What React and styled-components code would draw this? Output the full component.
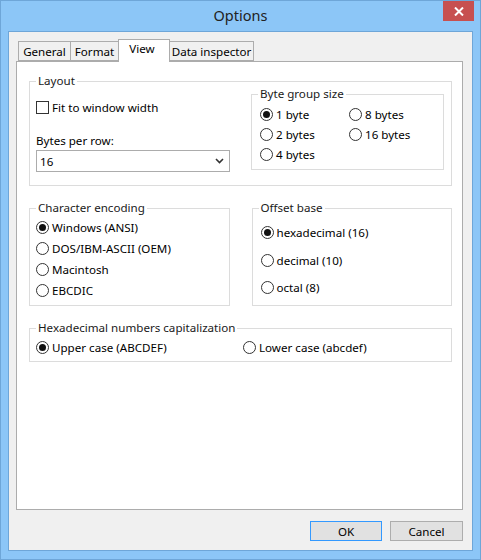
import React from "react";
import styled, { createGlobalStyle } from "styled-components";

const GlobalStyle = createGlobalStyle`
  html, body {
    margin: 0;
    padding: 0;
    background: #8cc6f7;
  }
  body {
    font-family: "Noto Sans", "Open Sans", sans-serif;
    font-size: 11.6px;
    color: #000;
  }
`;

const Window = styled.div`
  width: 481px;
  height: 560px;
  box-sizing: border-box;
  background: #8cc6f7;
  border: 1px solid #6ea6d8;
  display: flex;
  flex-direction: column;
`;

const TitleBar = styled.div`
  position: relative;
  box-sizing: border-box;
  height: 30px;
  padding-bottom: 3px;
  display: flex;
  align-items: center;
  justify-content: center;
  font-size: 14.5px;
  color: #222;
`;

const CloseButton = styled.div`
  position: absolute;
  top: 0;
  right: 6px;
  width: 31px;
  height: 20px;
  background: #c75050;
  display: flex;
  align-items: center;
  justify-content: center;
`;

const Client = styled.div`
  margin: 0 7px 8px 7px;
  height: 520px;
  box-sizing: border-box;
  background: #f0f0f0;
  border: 1px solid #6ea6d8;
  padding: 7px 9px 0 7px;
  display: flex;
  flex-direction: column;
`;

const TabStrip = styled.div`
  display: flex;
  align-items: flex-end;
  height: 22px;
  padding-left: 2px;
  position: relative;
  z-index: 1;
`;

const Tab = styled.div`
  box-sizing: border-box;
  width: ${(p) => p.$w}px;
  height: ${(p) => (p.$active ? 23 : 20)}px;
  margin-bottom: ${(p) => (p.$active ? -1 : 0)}px;
  margin-left: -1px;
  border: 1px solid #acacac;
  border-bottom: ${(p) => (p.$active ? "none" : "1px solid #acacac")};
  background: ${(p) => (p.$active ? "#fff" : "#f0f0f0")};
  display: flex;
  align-items: ${(p) => (p.$active ? "flex-start" : "center")};
  justify-content: center;
  padding: ${(p) => (p.$active ? "1px 4px 0 0" : "0")};
  white-space: nowrap;
  &:first-child {
    margin-left: 0;
  }
`;

const Panel = styled.div`
  box-sizing: border-box;
  height: 449px;
  background: #fff;
  border: 1px solid #acacac;
  padding: 19px 10px 0 12px;
  display: flex;
  flex-direction: column;
  gap: 22px;
`;

const Group = styled.div`
  position: relative;
  box-sizing: border-box;
  border: 1px solid #dcdcdc;
  width: ${(p) => (p.$w ? `${p.$w}px` : "auto")};
  height: ${(p) => p.$h}px;
  padding: ${(p) => p.$pad || "0"};
`;

const GroupRow = styled.div`
  display: flex;
  gap: 22px;
`;

const Legend = styled.span`
  position: absolute;
  top: -9px;
  left: 6px;
  padding: 0 2px;
  background: #fff;
  line-height: 16px;
  color: #1a1a1a;
`;

const LayoutRow = styled.div`
  display: flex;
  align-items: flex-start;
  height: 100%;
  padding: 0 7px 0 6px;
`;

const LeftColumn = styled.div`
  width: 194px;
  padding-top: 17px;
  display: flex;
  flex-direction: column;
`;

const FieldLabel = styled.div`
  margin-top: 18px;
  line-height: 16px;
`;

const Select = styled.div`
  box-sizing: border-box;
  margin-top: 1px;
  height: 22px;
  border: 1px solid #acacac;
  display: flex;
  align-items: center;
  justify-content: space-between;
  padding: 0 5px 0 3px;
`;

const InnerGroup = styled(Group)`
  margin-left: auto;
  margin-top: 12px;
`;

const Options = styled.div`
  display: grid;
  grid-template-columns: ${(p) => p.$cols || "1fr"};
  grid-auto-rows: ${(p) => p.$row}px;
`;

const OptionRow = styled.label`
  display: flex;
  align-items: center;
  gap: 3px;
  height: ${(p) => (p.$h ? `${p.$h}px` : "auto")};
  white-space: nowrap;
`;

const Circle = styled.span`
  box-sizing: border-box;
  width: 13px;
  height: 13px;
  border-radius: 50%;
  border: 1px solid #333;
  background: #fff;
  display: flex;
  align-items: center;
  justify-content: center;
  flex-shrink: 0;
  &::after {
    content: "";
    width: 7px;
    height: 7px;
    border-radius: 50%;
    background: ${(p) => (p.$on ? "#111" : "transparent")};
  }
`;

const Box = styled.span`
  box-sizing: border-box;
  width: 13px;
  height: 13px;
  border: 1px solid #333;
  background: #fff;
  flex-shrink: 0;
`;

const ButtonBar = styled.div`
  display: flex;
  justify-content: flex-end;
  gap: 8px;
  margin-top: 11px;
`;

const Button = styled.div`
  box-sizing: border-box;
  width: ${(p) => p.$w}px;
  height: 20px;
  background: #e1e1e1;
  border: 1px solid ${(p) => (p.$default ? "#3399ff" : "#adadad")};
  display: flex;
  align-items: center;
  justify-content: center;
`;

const Radio = ({ on, children }) => (
  <OptionRow>
    <Circle $on={on} />
    {children}
  </OptionRow>
);

const Chevron = () => (
  <svg width="9" height="6" viewBox="0 0 9 6">
    <path d="M1 1 L4.5 4.5 L8 1" fill="none" stroke="#333" strokeWidth="1.6" />
  </svg>
);

const CloseIcon = () => (
  <svg width="10" height="9" viewBox="0 0 10 9">
    <path d="M1 0.5 L9 8.5 M9 0.5 L1 8.5" stroke="#fff" strokeWidth="2" />
  </svg>
);

export default function App() {
  return (
    <>
      <GlobalStyle />
      <Window>
        <TitleBar>
          Options
          <CloseButton>
            <CloseIcon />
          </CloseButton>
        </TitleBar>
        <Client>
          <TabStrip>
            <Tab $w={53}>General</Tab>
            <Tab $w={49}>Format</Tab>
            <Tab $w={52} $active>
              View
            </Tab>
            <Tab $w={85}>Data inspector</Tab>
          </TabStrip>
          <Panel>
            <Group $h={105}>
              <Legend>Layout</Legend>
              <LayoutRow>
                <LeftColumn>
                  <OptionRow $h={16}>
                    <Box />
                    Fit to window width
                  </OptionRow>
                  <FieldLabel>Bytes per row:</FieldLabel>
                  <Select>
                    <span>16</span>
                    <Chevron />
                  </Select>
                </LeftColumn>
                <InnerGroup $w={193} $h={76} $pad="9px 0 0 8px">
                  <Legend>Byte group size</Legend>
                  <Options $cols="89px auto" $row={20}>
                    <Radio on>1 byte</Radio>
                    <Radio>8 bytes</Radio>
                    <Radio>2 bytes</Radio>
                    <Radio>16 bytes</Radio>
                    <Radio>4 bytes</Radio>
                  </Options>
                </InnerGroup>
              </LayoutRow>
            </Group>
            <GroupRow>
              <Group $w={201} $h={98} $pad="8px 0 0 6px">
                <Legend>Character encoding</Legend>
                <Options $row={21}>
                  <Radio on>Windows (ANSI)</Radio>
                  <Radio>DOS/IBM-ASCII (OEM)</Radio>
                  <Radio>Macintosh</Radio>
                  <Radio>EBCDIC</Radio>
                </Options>
              </Group>
              <Group $w={201} $h={98} $pad="10px 0 0 8px">
                <Legend>Offset base</Legend>
                <Options $row={27.5}>
                  <Radio on>hexadecimal (16)</Radio>
                  <Radio>decimal (10)</Radio>
                  <Radio>octal (8)</Radio>
                </Options>
              </Group>
            </GroupRow>
            <Group $h={34} $pad="8px 0 0 6px">
              <Legend>Hexadecimal numbers capitalization</Legend>
              <Options $cols="207px auto" $row={20}>
                <Radio on>Upper case (ABCDEF)</Radio>
                <Radio>Lower case (abcdef)</Radio>
              </Options>
            </Group>
          </Panel>
          <ButtonBar>
            <Button $w={72} $default>
              OK
            </Button>
            <Button $w={73}>Cancel</Button>
          </ButtonBar>
        </Client>
      </Window>
    </>
  );
}
